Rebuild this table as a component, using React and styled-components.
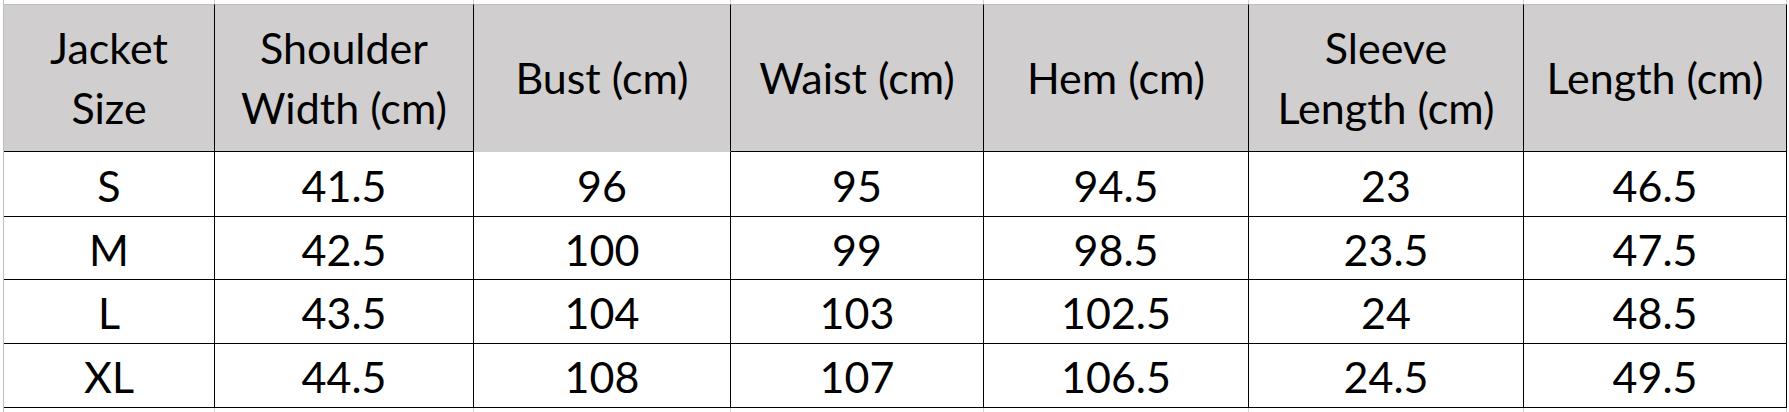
import React from "react";
import styled, { createGlobalStyle } from "styled-components";

const GlobalStyle = createGlobalStyle`
  html, body {
    margin: 0;
    padding: 0;
    background: #ffffff;
  }
  body {
    font-family: Lato, "Liberation Sans", sans-serif;
    color: #000000;
  }
`;

const COLUMNS = [211, 259, 257, 253, 265, 275, 263];

const HEADERS = [
  ["Jacket", "Size"],
  ["Shoulder", "Width (cm)"],
  ["Bust (cm)"],
  ["Waist (cm)"],
  ["Hem (cm)"],
  ["Sleeve", "Length (cm)"],
  ["Length (cm)"],
];

const ROWS = [
  { size: "S", values: ["41.5", "96", "95", "94.5", "23", "46.5"] },
  { size: "M", values: ["42.5", "100", "99", "98.5", "23.5", "47.5"] },
  { size: "L", values: ["43.5", "104", "103", "102.5", "24", "48.5"] },
  { size: "XL", values: ["44.5", "108", "107", "106.5", "24.5", "49.5"] },
];

const Sheet = styled.div`
  width: 1789px;
  height: 412px;
  overflow: hidden;
  padding-left: 3px;
  box-sizing: border-box;
`;

const Grid = styled.div`
  display: grid;
  grid-template-columns: 1px ${COLUMNS.map((w) => `${w}px`).join(" ")};
  grid-template-rows: 4px 148px 65px 63px 64px 64px 4px;
`;

const Gutter = styled.div`
  background: #bfbfbf;
`;

const Strip = styled.div`
  border-right: 1px solid #d4d4d4;
  box-sizing: border-box;
`;

const Head = styled.div`
  display: flex;
  flex-direction: column;
  align-items: center;
  justify-content: center;
  box-sizing: border-box;
  background: #d0cece;
  border-top: 1px solid #bfbfbf;
  border-right: 1px solid #000;
  border-bottom: 1px solid ${(p) => (p.$open ? "#d0cece" : "#000")};
  font-size: 43px;
  line-height: 60px;
  text-align: center;
  white-space: nowrap;
`;

const Cell = styled.div`
  display: flex;
  align-items: center;
  justify-content: center;
  box-sizing: border-box;
  border-right: 1px solid #000;
  border-bottom: 1px solid #000;
  font-size: 43px;
  line-height: 1;
  padding-top: 2px;
`;

export default function App() {
  return (
    <>
      <GlobalStyle />
      <Sheet>
        <Grid>
          <Gutter />
          {COLUMNS.map((_, i) => (
            <Strip key={`t${i}`} />
          ))}

          <Gutter />
          {HEADERS.map((lines, i) => (
            <Head key={`h${i}`} $open={i === 2}>
              {lines.map((line) => (
                <span key={line}>{line}</span>
              ))}
            </Head>
          ))}

          {ROWS.map((row) => (
            <React.Fragment key={row.size}>
              <Gutter />
              <Cell>{row.size}</Cell>
              {row.values.map((v, i) => (
                <Cell key={i}>{v}</Cell>
              ))}
            </React.Fragment>
          ))}

          <Gutter />
          {COLUMNS.map((_, i) => (
            <Strip key={`b${i}`} />
          ))}
        </Grid>
      </Sheet>
    </>
  );
}
